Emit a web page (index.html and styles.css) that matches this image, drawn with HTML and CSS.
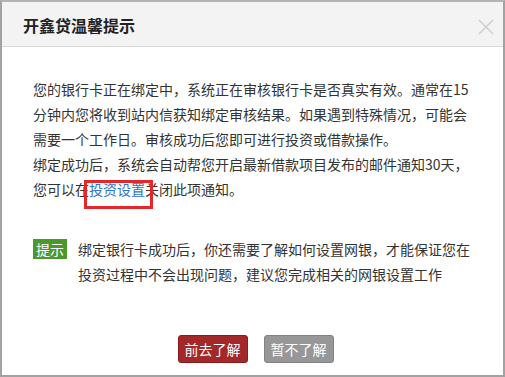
FILE: index.html
```html
<!DOCTYPE html>
<html lang="zh-CN">
<head>
<meta charset="utf-8">
<link rel="stylesheet" href="styles.css">
</head>
<body>
<div class="dialog">
  <div class="dialog-header">
    <h1 class="dialog-title">开鑫贷温馨提示</h1>
    <span class="dialog-close" aria-label="关闭">
      <svg width="16" height="16" viewBox="0 0 16 16"><path d="M1 1L15 15M15 1L1 15" stroke="#cfcfcf" stroke-width="1.6" fill="none"/></svg>
    </span>
  </div>
  <div class="dialog-body">
    <p class="message">您的银行卡正在绑定中，系统正在审核银行卡是否真实有效。通常在15分钟内您将收到站内信获知绑定审核结果。如果遇到特殊情况，可能会需要一个工作日。审核成功后您即可进行投资或借款操作。<br>绑定成功后，系统会自动帮您开启最新借款项目发布的邮件通知30天，<br>您可以在<a class="link" href="#">投资设置</a>关闭此项通知。</p>
    <div class="tip">
      <span class="tip-badge">提示</span>
      <p class="tip-text">绑定银行卡成功后，你还需要了解如何设置网银，才能保证您在投资过程中不会出现问题，建议您完成相关的网银设置工作</p>
    </div>
    <div class="actions">
      <button class="btn btn-primary">前去了解</button>
      <button class="btn btn-secondary">暂不了解</button>
    </div>
  </div>
</div>
</body>
</html>
```
FILE: styles.css
```css
html, body {
  margin: 0;
  padding: 0;
  background: #ffffff;
}
body {
  font-family: "Microsoft YaHei", "Noto Sans CJK SC", "Noto Sans", sans-serif;
  color: #333333;
}
.dialog {
  width: 505px;
  height: 377px;
  box-sizing: border-box;
  border: 2px solid #a2a2a2;
  border-top-color: #b4b4b4;
  background: #ffffff;
  display: flex;
  flex-direction: column;
}
.dialog-header {
  height: 45px;
  box-sizing: border-box;
  background: #f3f3f3;
  border-bottom: 1px solid #d8d8d8;
  display: flex;
  align-items: center;
  justify-content: space-between;
  padding: 0 9px 0 21px;
}
.dialog-title {
  margin: 0;
  font-size: 16px;
  font-weight: bold;
  color: #222222;
  line-height: 20px;
  position: relative;
  top: 1px;
}
.dialog-close {
  display: flex;
  width: 16px;
  height: 16px;
  position: relative;
  top: 3px;
}
.dialog-body {
  flex: 1;
  padding: 30px 30px 0 31px;
  display: flex;
  flex-direction: column;
}
.message {
  margin: 0;
  width: 440px;
  font-size: 14px;
  line-height: 25px;
  color: #333333;
}
.link {
  color: #2f74c6;
  text-decoration: none;
  position: relative;
}
.link::after {
  content: "";
  position: absolute;
  left: -5px;
  right: -8px;
  top: 1px;
  height: 29px;
  border: 3px solid #e5262b;
  box-sizing: border-box;
}
.tip {
  display: flex;
  align-items: flex-start;
  margin-top: 35px;
}
.tip-badge {
  flex: none;
  width: 34px;
  height: 20px;
  margin-top: 2px;
  background: #4b982c;
  color: #ffffff;
  font-size: 14px;
  line-height: 20px;
  text-align: center;
}
.tip-text {
  margin: 0 0 0 11px;
  width: 396px;
  font-size: 14px;
  line-height: 25px;
  color: #333333;
}
.actions {
  display: flex;
  justify-content: center;
  gap: 16px;
  margin-top: 48px;
  padding-left: 5px;
}
.btn {
  width: 70px;
  height: 28px;
  box-sizing: border-box;
  border-radius: 3px;
  font-family: inherit;
  font-size: 14px;
  color: #ffffff;
  padding: 0;
  line-height: 26px;
  cursor: pointer;
}
.btn-primary {
  background: #a3282a;
  border: 1px solid #8a1c1e;
}
.btn-secondary {
  background: #979797;
  border: 1px solid #828282;
}
```
